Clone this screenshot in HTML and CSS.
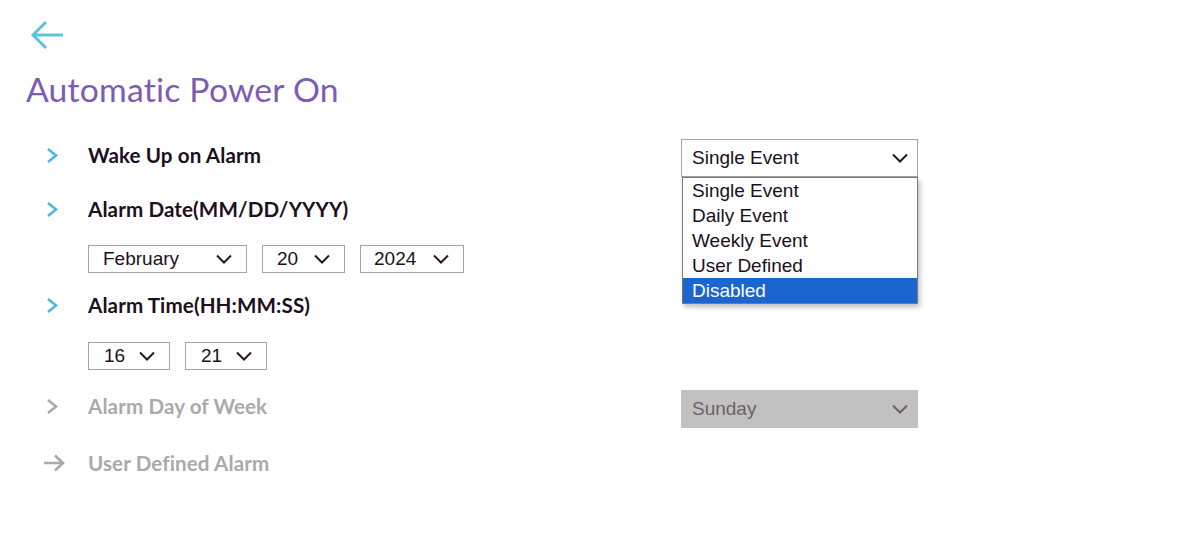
FILE: index.html
```html
<!DOCTYPE html>
<html>
<head>
<meta charset="utf-8">
<link rel="stylesheet" href="styles.css">
</head>
<body>
<div class="page">
  <div class="back">
    <svg width="36" height="32" viewBox="0 0 36 32"><path d="M34 16H4M17 3L4 16l13 13" fill="none" stroke="#5bc3dc" stroke-width="3"/></svg>
  </div>
  <h1 class="title">Automatic Power On</h1>

  <div class="row row-1">
    <span class="chev"><svg width="13" height="17" viewBox="0 0 13 17"><path d="M2 2l8 6.5-8 6.5" fill="none" stroke="#4fb8d8" stroke-width="2.6"/></svg></span>
    <span class="label">Wake Up on Alarm</span>
    <div class="wide-col">
      <div class="sel sel-wide">
        <span>Single Event</span>
        <svg class="caret" width="16" height="10" viewBox="0 0 16 10"><path d="M1 1.5l7 7 7-7" fill="none" stroke="currentColor" stroke-width="2"/></svg>
      </div>
      <div class="menu">
        <div class="opt">Single Event</div>
        <div class="opt">Daily Event</div>
        <div class="opt">Weekly Event</div>
        <div class="opt">User Defined</div>
        <div class="opt active">Disabled</div>
      </div>
    </div>
  </div>

  <div class="row row-2">
    <span class="chev"><svg width="13" height="17" viewBox="0 0 13 17"><path d="M2 2l8 6.5-8 6.5" fill="none" stroke="#4fb8d8" stroke-width="2.6"/></svg></span>
    <span class="label">Alarm Date(MM/DD/YYYY)</span>
  </div>
  <div class="controls date-controls">
    <div class="sel sel-small w-month"><span>February</span><svg class="caret" width="16" height="10" viewBox="0 0 16 10"><path d="M1 1.5l7 7 7-7" fill="none" stroke="currentColor" stroke-width="2"/></svg></div>
    <div class="sel sel-small w-day"><span>20</span><svg class="caret" width="16" height="10" viewBox="0 0 16 10"><path d="M1 1.5l7 7 7-7" fill="none" stroke="currentColor" stroke-width="2"/></svg></div>
    <div class="sel sel-small w-year"><span>2024</span><svg class="caret" width="16" height="10" viewBox="0 0 16 10"><path d="M1 1.5l7 7 7-7" fill="none" stroke="currentColor" stroke-width="2"/></svg></div>
  </div>

  <div class="row row-3">
    <span class="chev"><svg width="13" height="17" viewBox="0 0 13 17"><path d="M2 2l8 6.5-8 6.5" fill="none" stroke="#4fb8d8" stroke-width="2.6"/></svg></span>
    <span class="label">Alarm Time(HH:MM:SS)</span>
  </div>
  <div class="controls time-controls">
    <div class="sel sel-small w-time"><span>16</span><svg class="caret" width="16" height="10" viewBox="0 0 16 10"><path d="M1 1.5l7 7 7-7" fill="none" stroke="currentColor" stroke-width="2"/></svg></div>
    <div class="sel sel-small w-time"><span>21</span><svg class="caret" width="16" height="10" viewBox="0 0 16 10"><path d="M1 1.5l7 7 7-7" fill="none" stroke="currentColor" stroke-width="2"/></svg></div>
  </div>

  <div class="row row-4 disabled">
    <span class="chev"><svg width="13" height="17" viewBox="0 0 13 17"><path d="M2 2l8 6.5-8 6.5" fill="none" stroke="#a9a9a9" stroke-width="2.6"/></svg></span>
    <span class="label">Alarm Day of Week</span>
    <div class="wide-col">
      <div class="sel sel-wide sel-disabled">
        <span>Sunday</span>
        <svg class="caret" width="16" height="10" viewBox="0 0 16 10"><path d="M1 1.5l7 7 7-7" fill="none" stroke="currentColor" stroke-width="2"/></svg>
      </div>
    </div>
  </div>

  <div class="row row-5 disabled">
    <span class="chev arrow"><svg width="22" height="18" viewBox="0 0 22 18"><path d="M1 9h19M12 1.5l8 7.5-8 7.5" fill="none" stroke="#a9a9a9" stroke-width="2.6"/></svg></span>
    <span class="label">User Defined Alarm</span>
  </div>
</div>
</body>
</html>
```

FILE: styles.css
```css
* { box-sizing: border-box; }
html, body { margin: 0; padding: 0; background: #fff; }
body { font-family: "Lato", "Noto Sans", sans-serif; color: #1d0f1d; }
.page { width: 1179px; height: 554px; position: relative; }

.back { padding: 19px 0 0 29px; height: 52px; }
.back svg { display: block; }

.title {
  margin: 18px 0 0 26px;
  font-family: "Lato", sans-serif;
  font-weight: 400;
  font-size: 33.7px;
  line-height: 38px;
  color: #7d5cb3;
  letter-spacing: 0.2px;
}

.row { display: flex; align-items: center; position: relative; height: 30px; }
.chev { width: 88px; display: flex; justify-content: flex-start; padding-left: 46px; }
.chev.arrow { padding-left: 43px; }
.chev svg { display: block; }
.label { font-weight: 700; font-size: 20.6px; letter-spacing: 0.1px; width: 593px; }
.disabled .label { color: #aaaaaa; }

.row-1 { margin-top: 32px; }
.row-2 { margin-top: 24px; }
.row-3 { margin-top: 17px; }
.row-4 { margin-top: 21px; }
.row-5 { margin-top: 27px; }

.wide-col { position: relative; width: 237px; top: 3px; }

.sel {
  display: flex; align-items: center; justify-content: space-between;
  font-family: "Liberation Sans", Arial, sans-serif;
  color: #1d0f1d;
  background: #fff;
  border: 1px solid #a4a4a4;
}
.sel .caret { display: block; color: #2a1428; }
.sel-wide { height: 38px; width: 237px; padding: 0 9px 0 10px; font-size: 19px; }
.sel-disabled { background: #c1c1c1; border-color: #c1c1c1; color: #6e5f6a; }
.sel-disabled .caret { color: #6e5f6a; }

.menu {
  position: absolute; left: 1px; top: 38px; width: 236px;
  border: 1px solid #7a7a7a;
  background: #fff;
  box-shadow: 2px 3px 5px rgba(0,0,0,0.25);
  font-family: "Liberation Sans", Arial, sans-serif;
  font-size: 19px;
  z-index: 2;
}
.opt { height: 25px; line-height: 25px; padding-left: 9px; color: #1d0f1d; }
.opt.active { background: #1a65d0; color: #fff; }

.controls { display: flex; gap: 15px; padding-left: 88px; }
.date-controls { margin-top: 21px; }
.time-controls { margin-top: 22px; }
.sel-small { height: 28px; font-size: 19px; padding: 0 14px 0 14px; }
.w-month { width: 159px; }
.w-day { width: 83px; padding-left: 14px; }
.w-year { width: 104px; padding-left: 13px; }
.w-time { width: 82px; padding-left: 15px; }
```
